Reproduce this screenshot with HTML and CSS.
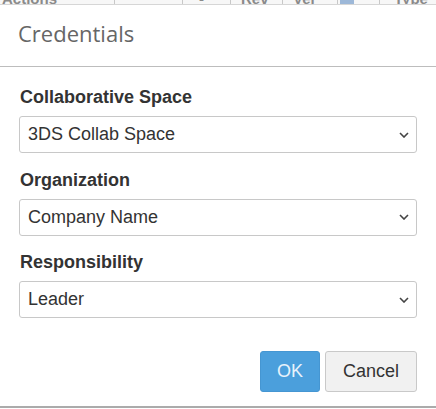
FILE: index.html
```html
<!DOCTYPE html>
<html>
<head>
<meta charset="utf-8">
<link rel="stylesheet" href="styles.css">
</head>
<body>
<div class="strip">
  <div class="cell c1">Actions</div>
  <div class="cell c2"></div>
  <div class="cell c3">-</div>
  <div class="cell c4">Rev</div>
  <div class="cell c5">Ver</div>
  <div class="cell c6"><span class="flag"></span></div>
  <div class="cell c7">Type</div>
</div>
<div class="dialog">
  <div class="header"><span class="title">Credentials</span></div>
  <div class="body">
    <div class="group">
      <div class="label">Collaborative Space</div>
      <div class="select"><span>3DS Collab Space</span><svg class="chev" width="10" height="6" viewBox="0 0 10 6"><polyline points="1,1 5,5 9,1" fill="none" stroke="#444" stroke-width="1.6"/></svg></div>
    </div>
    <div class="group">
      <div class="label">Organization</div>
      <div class="select"><span>Company Name</span><svg class="chev" width="10" height="6" viewBox="0 0 10 6"><polyline points="1,1 5,5 9,1" fill="none" stroke="#444" stroke-width="1.6"/></svg></div>
    </div>
    <div class="group">
      <div class="label">Responsibility</div>
      <div class="select"><span>Leader</span><svg class="chev" width="10" height="6" viewBox="0 0 10 6"><polyline points="1,1 5,5 9,1" fill="none" stroke="#444" stroke-width="1.6"/></svg></div>
    </div>
  </div>
  <div class="footer">
    <button class="btn ok">OK</button>
    <button class="btn cancel">Cancel</button>
  </div>
</div>
</body>
</html>
```
FILE: styles.css
```css
html, body {
  margin: 0;
  padding: 0;
  background: #ffffff;
}
body {
  width: 436px;
  height: 409px;
  overflow: hidden;
  font-family: "Liberation Sans", Arial, sans-serif;
}
.strip {
  height: 4px;
  border-bottom: 1px solid #d6d6d6;
  background: #f7f7f7;
  display: flex;
  align-items: flex-end;
  overflow: hidden;
  margin-bottom: 1px;
}
.cell {
  height: 16px;
  line-height: 16px;
  font-size: 15px;
  font-weight: bold;
  color: #8a8a8a;
  border-right: 1px solid #c8c8c8;
  box-sizing: border-box;
  flex: none;
  margin-bottom: -3px;
  padding-left: 10px;
}
.c1 { width: 115px; padding-left: 2px; }
.c2 { width: 68px; }
.c3 { width: 48px; padding-left: 16px; }
.c4 { width: 52px; }
.c5 { width: 55px; }
.c6 { width: 42px; padding-left: 2px; }
.c7 { width: 56px; border-right: none; padding-left: 14px; }
.flag {
  display: inline-block;
  width: 14px;
  height: 16px;
  background: #9db8d8;
}
.dialog {
  background: #fff;
  border-bottom: 2px solid #ababab;
}
.header {
  padding: 12px 18px 18px;
  border-bottom: 1px solid #bdbdbd;
}
.title {
  display: block;
  font-family: "Open Sans", sans-serif;
  font-size: 22px;
  line-height: 30px;
  color: #666666;
}
.body {
  padding: 19px 19px 0;
  display: flex;
  flex-direction: column;
  gap: 15.5px;
}
.label {
  font-size: 18px;
  line-height: 22px;
  font-weight: bold;
  color: #333;
  padding-left: 1px;
  margin-bottom: 8px;
}
.select {
  height: 37px;
  box-sizing: border-box;
  border: 1px solid #c8c8c8;
  border-radius: 3px;
  display: flex;
  align-items: center;
  justify-content: space-between;
  padding: 0 7px 0 8px;
  font-size: 18px;
  color: #333;
}
.chev {
  display: block;
}
.footer {
  padding: 33px 19px 14px;
  display: flex;
  justify-content: flex-end;
  gap: 5px;
}
.btn {
  height: 41px;
  font-family: "Liberation Sans", Arial, sans-serif;
  font-size: 18px;
  border-radius: 3px;
  padding: 0 16px;
  margin: 0;
  cursor: pointer;
}
.ok {
  width: 60px;
  background: #4b9fdc;
  border: 1px solid #4596d2;
  color: #e8f2fb;
}
.cancel {
  width: 92px;
  background: #f1f1f1;
  border: 1px solid #c9c9c9;
  color: #333;
}
```
